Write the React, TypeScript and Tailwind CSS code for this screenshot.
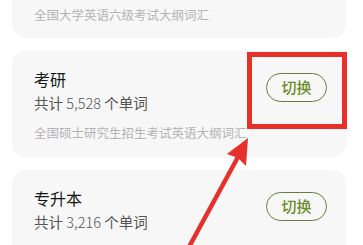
import React from "react";

const cards: { title: string; count: string; desc?: string }[] = [
  { title: "考研", count: "5,528", desc: "全国硕士研究生招生考试英语大纲词汇" },
  { title: "专升本", count: "3,216" },
];

function Card({ title, count, desc }: { title: string; count: string; desc?: string }) {
  return (
    <div
      className={
        desc
          ? "flex items-start justify-between rounded-[14px] bg-[#f7f7f7] pl-[22px] pr-[19px] pt-4 pb-[15px]"
          : "flex items-start justify-between rounded-t-[14px] bg-[#f7f7f7] pl-[22px] pr-[19px] pt-4 pb-[20px]"
      }
    >
      <div className="flex flex-col">
        <div className="text-[16px] leading-[24px] text-[#151515]">{title}</div>
        <div className="text-[14.5px] leading-[22px] text-[#555555] mt-[1px]">
          共计 <span className="font-light">{count}</span> 个单词
        </div>
        {desc && <div className="mt-[10px] text-[12.5px] leading-[18px] text-[#b3b3b3]">{desc}</div>}
      </div>
      <button className="mt-[6px] flex h-[29px] w-[61px] items-center justify-center rounded-full border border-[#6b7a3c] text-[15px] font-medium text-[#6a8c2c]">
        切换
      </button>
    </div>
  );
}

export default function App() {
  return (
    <div
      className="relative h-[245px] w-[363px] overflow-hidden bg-white"
      style={{ fontFamily: '"Noto Sans CJK SC", "Noto Sans", sans-serif' }}
    >
      <div className="ml-[12px] mr-[17px] flex flex-col gap-[13px]">
        <div className="rounded-b-[14px] bg-[#f7f7f7] pl-[22px] pt-[6px] pb-[14px]">
          <div className="text-[12.5px] leading-[18px] text-[#b3b3b3]">全国大学英语六级考试大纲词汇</div>
        </div>
        {cards.map((c) => (
          <Card key={c.title} {...c} />
        ))}
      </div>
      <div className="absolute left-[247px] top-[52px] h-[77px] w-[100px] border-[5px] border-[#e8302a]" />
      <svg className="absolute left-0 top-0" width="363" height="245" viewBox="0 0 363 245">
        <line x1="189" y1="247" x2="238" y2="157" stroke="#e8302a" strokeWidth="4.5" strokeLinecap="round" />
        <polygon points="248,138 246,166 238,158 227,154" fill="#e8302a" />
      </svg>
    </div>
  );
}
